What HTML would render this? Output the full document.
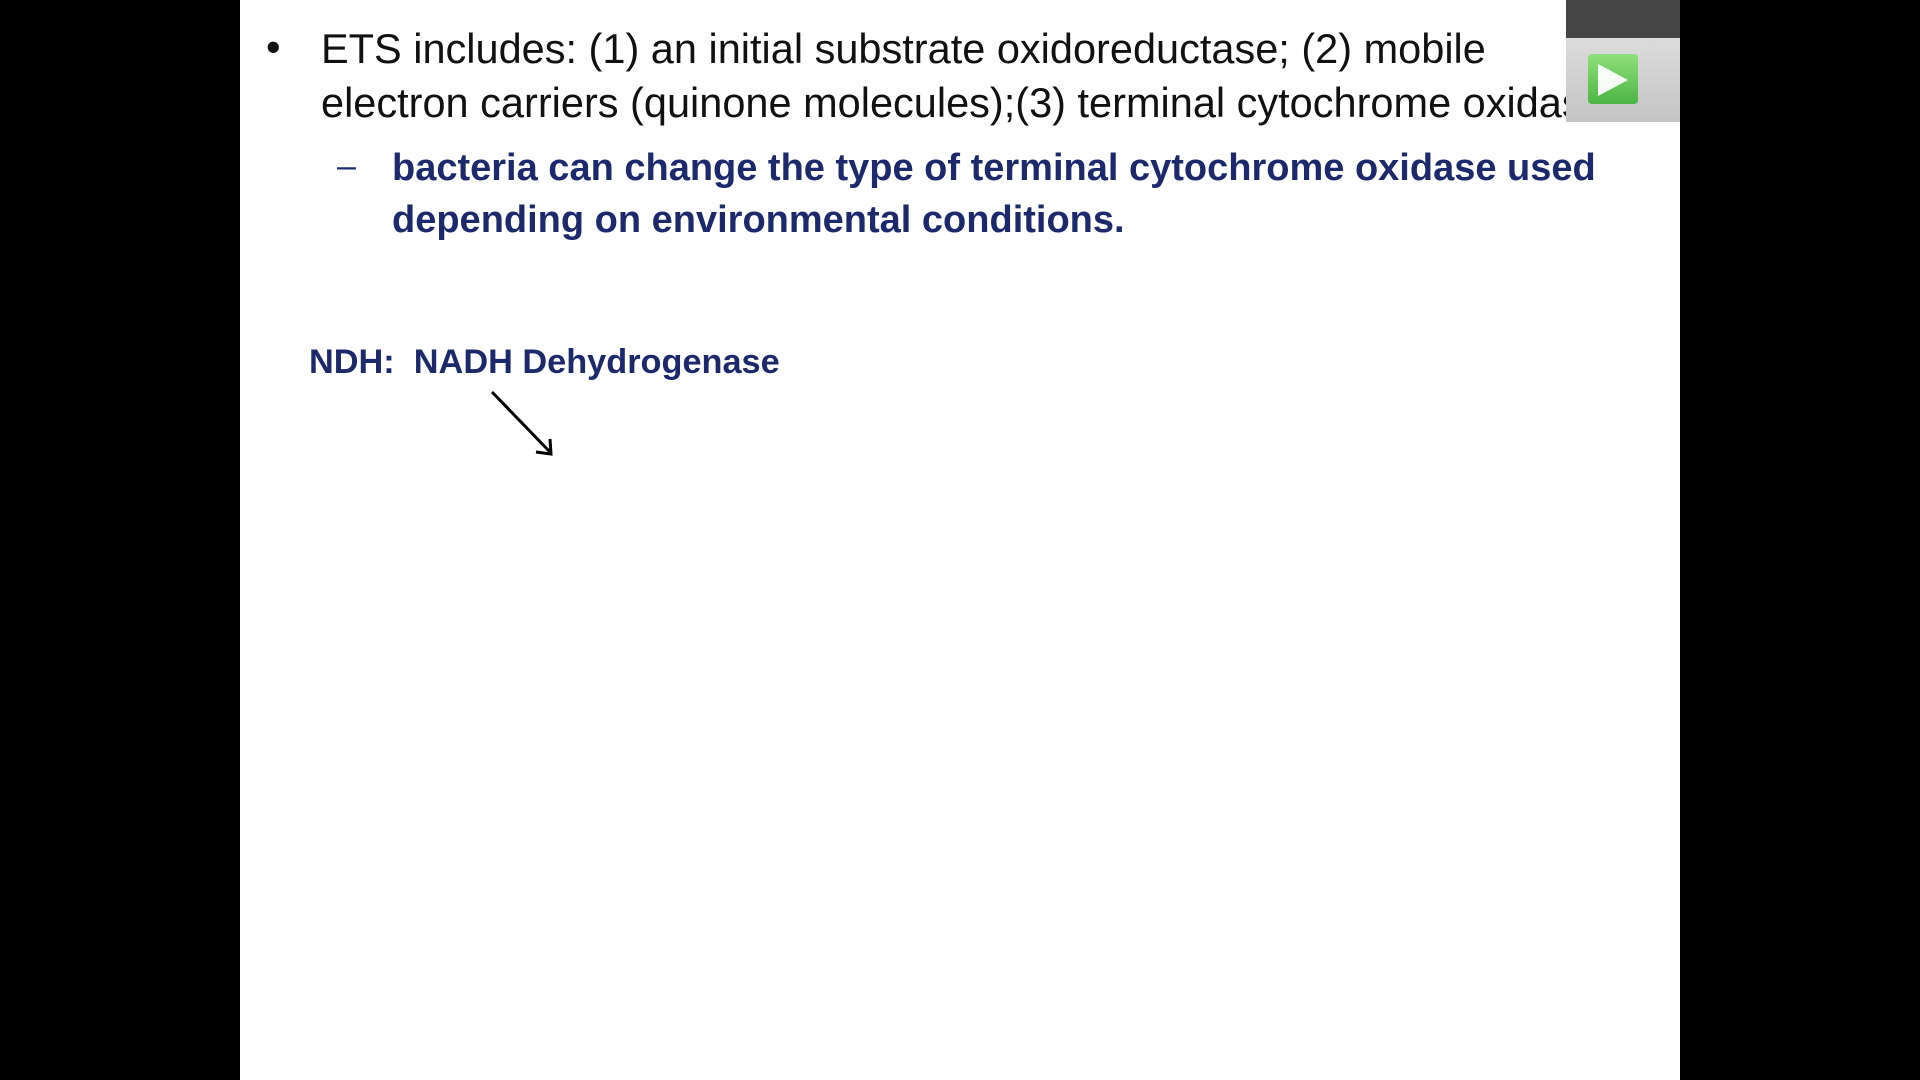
<!DOCTYPE html>
<html><head><meta charset="utf-8"><style>
html,body{margin:0;padding:0;width:1920px;height:1080px;background:#000;overflow:hidden}
.slide{position:absolute;left:240px;top:0;width:1440px;height:1080px;background:#fff}
.t{position:absolute;white-space:nowrap;line-height:1;font-family:"Liberation Sans",sans-serif}
.n{font-size:41.5px;color:#111}
.b{font-size:38px;font-weight:bold;color:#1c2a6c}
</style></head><body>
<div class="slide"></div>
<div class="t n" style="left:266px;top:26px">•</div>
<div class="t n" style="left:321px;top:28px">ETS includes: (1) an initial substrate oxidoreductase; (2) mobile</div>
<div class="t n" style="left:321px;top:82px">electron carriers (quinone molecules);(3) terminal cytochrome oxidase</div>
<div class="t b" style="left:337px;top:149px;font-weight:normal;font-size:34px">–</div>
<div class="t b" style="left:392px;top:149px">bacteria can change the type of terminal cytochrome oxidase used</div>
<div class="t b" style="left:392px;top:201px">depending on environmental conditions.</div>
<div class="t b" style="left:309px;top:345px;font-size:34.3px">NDH:&nbsp; NADH Dehydrogenase</div>
<svg style="position:absolute;left:0;top:0" width="1920" height="1080">
<line x1="492" y1="392" x2="550" y2="452" stroke="#000" stroke-width="3"/>
<polyline points="536,452 551,454 550,439" fill="none" stroke="#000" stroke-width="3"/>
</svg>
<div style="position:absolute;left:1566px;top:0;width:114px;height:38px;background:#454545"></div>
<div style="position:absolute;left:1566px;top:38px;width:114px;height:84px;background:linear-gradient(#dcdcdc,#c4c4c4)"></div>
<div style="position:absolute;left:1588px;top:54px;width:50px;height:50px;border-radius:4px;background:linear-gradient(#8fe07a,#4cb544)"></div>
<svg style="position:absolute;left:1595px;top:62px" width="36" height="36"><polygon points="3,2 33,18 3,34" fill="#fff" opacity="0.95"/></svg>
</body></html>
